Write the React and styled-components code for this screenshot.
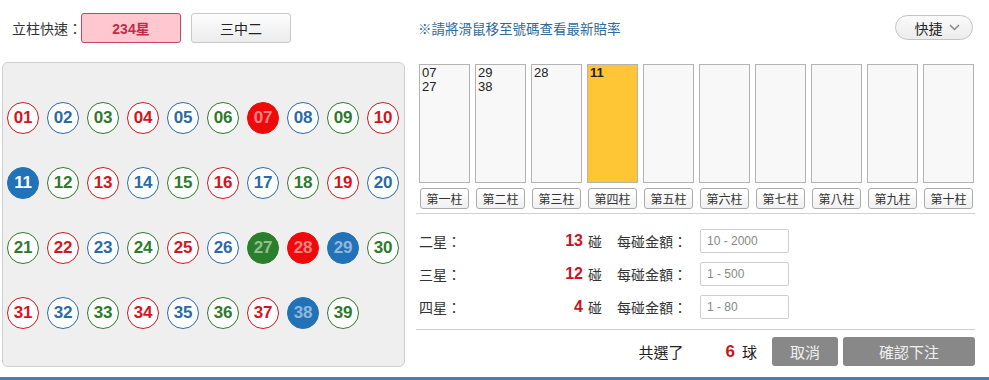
import React from "react";
import styled, { createGlobalStyle } from "styled-components";

const GlobalStyle = createGlobalStyle`
  body {
    margin: 0;
    background: #fff;
    font-family: "Liberation Sans", "Noto Sans CJK TC", sans-serif;
    color: #222;
  }
`;

const COLORS = ["#d4141e", "#2a6aa8", "#2d7a2d"];
const FILLS = ["#ee0a0a", "#2272b8", "#2a802a"];

const balls = Array.from({ length: 39 }, (_, i) => i + 1);
const picked = { 7: "other", 11: "current", 27: "other", 28: "other", 29: "other", 38: "other" };

const columns = [
  { name: "第一柱", nums: ["07", "27"] },
  { name: "第二柱", nums: ["29", "38"] },
  { name: "第三柱", nums: ["28"] },
  { name: "第四柱", nums: ["11"], active: true },
  { name: "第五柱", nums: [] },
  { name: "第六柱", nums: [] },
  { name: "第七柱", nums: [] },
  { name: "第八柱", nums: [] },
  { name: "第九柱", nums: [] },
  { name: "第十柱", nums: [] },
];

const stars = [
  { label: "二星：", count: 13, range: "10 - 2000" },
  { label: "三星：", count: 12, range: "1 - 500" },
  { label: "四星：", count: 4, range: "1 - 80" },
];

const Page = styled.div`
  width: 989px;
  height: 380px;
  overflow: hidden;
  display: flex;
  flex-direction: column;
`;

const TopBar = styled.div`
  height: 56px;
  display: flex;
  align-items: center;
`;

const QuickGroup = styled.div`
  width: 416px;
  box-sizing: border-box;
  padding-left: 12px;
  display: flex;
  align-items: center;
  font-size: 14px;
`;

const QuickLabel = styled.span`
  width: 69px;
  flex-shrink: 0;
  white-space: nowrap;
  color: #333;
`;

const QuickButton = styled.button`
  width: 100px;
  height: 30px;
  flex-shrink: 0;
  margin-right: 10px;
  border-radius: 3px;
  font-family: inherit;
  font-size: 14px;
  cursor: pointer;
  border: 1px solid ${(p) => (p.$on ? "#c2475e" : "#c8c8c8")};
  background: ${(p) => (p.$on ? "#ffc7cf" : "linear-gradient(#fdfdfd, #ececec)")};
  color: ${(p) => (p.$on ? "#c22c48" : "#222")};
  font-weight: ${(p) => (p.$on ? "bold" : "normal")};
`;

const NoteGroup = styled.div`
  flex: 1;
  display: flex;
  align-items: center;
  justify-content: space-between;
  padding: 0 16px 0 2px;
`;

const Note = styled.span`
  font-size: 13.5px;
  color: #2f6a9a;
`;

const PillButton = styled.button`
  width: 78px;
  height: 25px;
  margin-top: -1px;
  border-radius: 13px;
  border: 1px solid #c4c4c4;
  background: linear-gradient(#fbfbfb, #ececec);
  font-family: inherit;
  font-size: 14px;
  color: #222;
  display: flex;
  align-items: center;
  justify-content: center;
  gap: 6px;
  padding: 0 0 0 6px;
`;

const Main = styled.div`
  display: flex;
  margin-top: 6px;
  height: 305px;
`;

const BallPanel = styled.div`
  margin-left: 2px;
  width: 403px;
  box-sizing: border-box;
  background: #efefef;
  border: 1px solid #cfcfcf;
  border-radius: 6px;
  padding: 39px 4px 0 4px;
  display: grid;
  grid-template-columns: repeat(10, 32px);
  grid-auto-rows: 32px;
  column-gap: 8px;
  row-gap: 33px;
  align-content: start;
`;

const Ball = styled.div`
  width: 32px;
  height: 32px;
  box-sizing: border-box;
  border-radius: 50%;
  border: 1px solid ${(p) => (p.$state ? p.$fill : p.$color)};
  background: ${(p) => (p.$state ? p.$fill : "#fff")};
  color: ${(p) =>
    p.$state === "current" ? "#fff" : p.$state ? "rgba(255,255,255,0.5)" : p.$color};
  font-weight: bold;
  font-size: 17px;
  display: flex;
  align-items: center;
  justify-content: center;
  letter-spacing: -0.3px;
`;

const Right = styled.div`
  margin-left: 11px;
  width: 559px;
  display: flex;
  flex-direction: column;
  padding-top: 2px;
`;

const ColumnRow = styled.div`
  display: flex;
  gap: 5px;
  padding: 0 1px 4px 3px;
  border-bottom: 1px solid #cfcfcf;
`;

const Column = styled.div`
  width: 51px;
  display: flex;
  flex-direction: column;
  align-items: center;
`;

const ColumnBox = styled.div`
  width: 51px;
  height: 119px;
  box-sizing: border-box;
  border: 1px solid #b3b3b3;
  background: ${(p) => (p.$active ? "#fec535" : "#f8f8f8")};
  padding: 1px 2px;
  font-size: 13px;
  line-height: 14px;
  font-weight: ${(p) => (p.$active ? "bold" : "normal")};
  color: #222;
`;

const ColumnLabel = styled.button`
  margin-top: 5px;
  width: 49px;
  height: 21px;
  padding: 0;
  border: 1px solid #aaa;
  border-radius: 3px;
  background: linear-gradient(#fff, #f1f1f1);
  font-family: inherit;
  font-size: 12px;
  color: #333;
`;

const StarList = styled.div`
  padding: 10px 0 6px;
  border-bottom: 1px solid #cfcfcf;
`;

const StarRow = styled.div`
  height: 33px;
  display: flex;
  align-items: center;
  font-size: 14px;
  color: #333;
`;

const StarLabel = styled.span`
  width: 120px;
  padding-left: 3px;
`;

const Count = styled.span`
  width: 44px;
  text-align: right;
  color: #c8161e;
  font-weight: bold;
  font-size: 16px;
`;

const Unit = styled.span`
  margin-left: 5px;
`;

const AmountLabel = styled.span`
  margin-left: 15px;
  width: 83px;
`;

const AmountInput = styled.input`
  width: 89px;
  height: 24px;
  box-sizing: border-box;
  border: 1px solid #cfcfcf;
  border-radius: 2px;
  padding: 0 6px;
  font-family: inherit;
  font-size: 12px;
  color: #666;
  &::placeholder {
    color: #888;
  }
`;

const SummaryRow = styled.div`
  display: flex;
  align-items: center;
  justify-content: flex-end;
  padding: 7px 0 0;
  font-size: 15px;
  color: #222;
`;

const SummaryText = styled.span`
  margin-right: 42px;
`;

const Total = styled.span`
  color: #c8161e;
  font-weight: bold;
  font-size: 17px;
  margin-right: 7px;
`;

const ActionButton = styled.button`
  width: ${(p) => p.$w}px;
  height: 29px;
  margin-left: ${(p) => p.$gap}px;
  border: none;
  border-radius: 3px;
  background: #888;
  color: #f0f0f0;
  font-family: inherit;
  font-size: 15px;
`;

const BottomBar = styled.div`
  margin-top: 10px;
  height: 3px;
  background: #4d7aa6;
`;

function Chevron() {
  return (
    <svg width="11" height="7" viewBox="0 0 11 7">
      <path d="M1 1l4.5 4.5L10 1" fill="none" stroke="#888" strokeWidth="1.5" />
    </svg>
  );
}

export default function App() {
  return (
    <Page>
      <GlobalStyle />
      <TopBar>
        <QuickGroup>
          <QuickLabel>立柱快速：</QuickLabel>
          <QuickButton $on>234星</QuickButton>
          <QuickButton>三中二</QuickButton>
        </QuickGroup>
        <NoteGroup>
          <Note>※請將滑鼠移至號碼查看最新賠率</Note>
          <PillButton>
            快捷 <Chevron />
          </PillButton>
        </NoteGroup>
      </TopBar>
      <Main>
        <BallPanel>
          {balls.map((n) => (
            <Ball
              key={n}
              $color={COLORS[(n - 1) % 3]}
              $fill={FILLS[(n - 1) % 3]}
              $state={picked[n]}
            >
              {String(n).padStart(2, "0")}
            </Ball>
          ))}
        </BallPanel>
        <Right>
          <ColumnRow>
            {columns.map((c) => (
              <Column key={c.name}>
                <ColumnBox $active={c.active}>
                  {c.nums.map((n) => (
                    <div key={n}>{n}</div>
                  ))}
                </ColumnBox>
                <ColumnLabel>{c.name}</ColumnLabel>
              </Column>
            ))}
          </ColumnRow>
          <StarList>
            {stars.map((s) => (
              <StarRow key={s.label}>
                <StarLabel>{s.label}</StarLabel>
                <Count>{s.count}</Count>
                <Unit>碰</Unit>
                <AmountLabel>每碰金額：</AmountLabel>
                <AmountInput placeholder={s.range} />
              </StarRow>
            ))}
          </StarList>
          <SummaryRow>
            <SummaryText>共選了</SummaryText>
            <Total>6</Total>
            <span>球</span>
            <ActionButton $w={66} $gap={15}>取消</ActionButton>
            <ActionButton $w={132} $gap={5}>確認下注</ActionButton>
          </SummaryRow>
        </Right>
      </Main>
      <BottomBar />
    </Page>
  );
}
